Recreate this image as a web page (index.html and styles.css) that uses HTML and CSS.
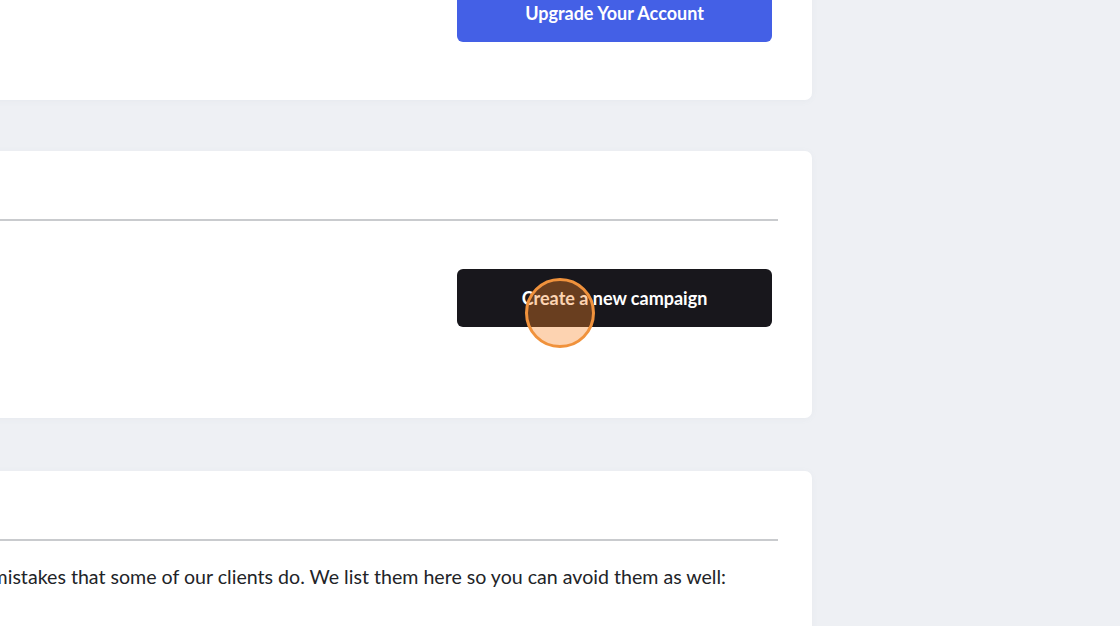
FILE: index.html
```html
<!DOCTYPE html>
<html lang="en">
<head>
<meta charset="utf-8">
<title>Dashboard</title>
<link rel="stylesheet" href="styles.css">
</head>
<body>
<div class="viewport">
  <main class="main">
    <section class="card card-top">
      <div class="row">
        <div class="row-text"></div>
        <a class="btn btn-blue" href="#">Upgrade Your Account</a>
      </div>
    </section>

    <section class="card card-campaign">
      <div class="card-head"></div>
      <div class="divider"></div>
      <div class="row row-campaign">
        <div class="row-text"></div>
        <a class="btn btn-dark" href="#">Create a new campaign</a>
      </div>
    </section>

    <section class="card card-tips">
      <div class="card-head"></div>
      <div class="divider"></div>
      <p class="tips-text">Here are the most common mistakes that some of our clients do. We list them here so you can avoid them as well:</p>
    </section>
  </main>
  <span class="click-dot"></span>
</div>
</body>
</html>
```

FILE: styles.css
```css
html, body {
  margin: 0;
  padding: 0;
  height: 100%;
  overflow: hidden;
}

body {
  background: #eef0f4;
  font-family: "Lato", "Open Sans", sans-serif;
  color: #222428;
}

.viewport {
  position: relative;
  width: 1120px;
  height: 626px;
  overflow: hidden;
}

.main {
  width: 1094px;
  margin-left: -282px;
  margin-top: -16px;
  display: flex;
  flex-direction: column;
}

.card {
  background: #ffffff;
  border-radius: 7px;
  padding: 0 34px 0 34px;
  box-shadow: 0 1px 6px rgba(120, 130, 150, 0.06);
}

.card-top {
  padding-bottom: 58px;
}

.card-campaign {
  margin-top: 51px;
  padding-bottom: 91px;
}

.card-tips {
  margin-top: 53px;
  padding-bottom: 60px;
}

.row {
  display: flex;
  justify-content: space-between;
  align-items: center;
  padding-right: 6px;
}

.btn {
  display: flex;
  align-items: center;
  justify-content: center;
  width: 315px;
  height: 58px;
  border-radius: 6px;
  color: #ffffff;
  font-weight: 700;
  font-size: 18px;
  text-decoration: none;
  box-sizing: border-box;
}

.btn-blue {
  background: #4460e6;
}

.btn-dark {
  background: #18171c;
}

.card-head {
  height: 68px;
}

.divider {
  height: 2px;
  background: #c9cbce;
}

.row-campaign {
  margin-top: 48px;
}

.tips-text {
  margin: 23px 0 0 0;
  font-size: 19.6px;
  line-height: 26px;
  white-space: nowrap;
  color: #222428;
}

.click-dot {
  position: absolute;
  left: 525px;
  top: 278px;
  width: 64px;
  height: 64px;
  border-radius: 50%;
  border: 3px solid #f0923c;
  background: rgba(250, 134, 38, 0.36);
}
```
